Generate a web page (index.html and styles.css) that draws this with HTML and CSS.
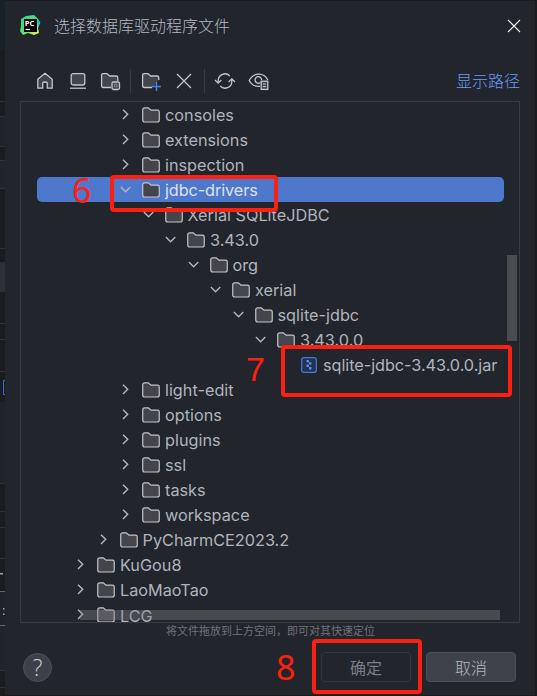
FILE: index.html
```html
<!DOCTYPE html>
<html lang="zh-CN">
<head>
<meta charset="utf-8">
<title>选择数据库驱动程序文件</title>
<link rel="stylesheet" href="styles.css">
</head>
<body>
<svg class="defs" width="0" height="0">
  <symbol id="folder" viewBox="0 0 18 16"><path d="M.75 2.8Q.75.8 2.75.8H6.3L9 3.2H15.5Q17.25 3.2 17.25 5V13Q17.25 15 15.3 15H2.7Q.75 15 .75 13Z" fill="#43454a" stroke="#c3c5ca" stroke-width="1.2"/></symbol>
  <symbol id="right" viewBox="0 0 12 12"><path d="M3 .7 7.7 5.3 3 9.9" fill="none" stroke="#b4b8bf" stroke-width="1.4"/></symbol>
  <symbol id="down" viewBox="0 0 12 12"><path d="M.9 3.1 5.6 7.7 10.3 3.1" fill="none" stroke="#b4b8bf" stroke-width="1.4"/></symbol>
</svg>
<svg class="editor" width="5" height="696" viewBox="0 0 5 696">
  <path d="M0 0h5v50H0z" fill="#18212b"/>
  <path d="M0 117h5v29H0zM0 160h5v28H0zM0 402h5v81H0zM0 592h5v78H0z" fill="#20252b"/>
  <path d="M0 262h5v30H0z" fill="#2c3037"/>
  <path d="M0 101.500h5M0 116.500h5M0 146.500h5M0 160.500h5M0 188.500h5M0 248.500h5M0 323.500h5M0 339.500h5M0 371.500h5M0 483.500h5M0 511.500h5M0 527.500h5M0 558.500h5M0 670.500h5M0 687.500h5" stroke="#30343a"/>
  <path d="M0 591.500h5M0 625.500h5" stroke="#62666c"/>
  <path d="M5 380.500H3.500v14H5" fill="none" stroke="#3d6fd0"/>
  <path d="M0 573h3v1.500H0zM3 608h1.500v1.500H3zM3 613.500h1.500v1.500H3z" fill="#a3a7ad"/>
</svg>
<main class="dialog">
  <header class="titlebar">
    <svg class="logo" width="21" height="21" viewBox="0 0 21 21">
      <defs><linearGradient id="lg" x1="0" y1="0" x2="1" y2="1"><stop offset="0" stop-color="#21d789"/><stop offset=".5" stop-color="#5bdc78"/><stop offset="1" stop-color="#fcf84a"/></linearGradient></defs>
      <path d="M1 4 6 1 14 0 18 4 20 8 18 13 19 18 14 20 8 18 3 20 0 16 1 11Z" fill="url(#lg)"/>
      <path d="M17 5 20.5 7 18 12Z" fill="#07c3f2"/>
      <rect x="4" y="4" width="13" height="13" fill="#000"/>
      <text class="logo-text" x="4.800" y="10.500">PC</text>
      <path d="M5.500 14.500h4.500" stroke="#fff" stroke-width="1.200"/>
    </svg>
    <h1>选择数据库驱动程序文件</h1>
    <svg class="close" width="14" height="14" viewBox="0 0 14 14"><path d="M1 1 13 13M13 1 1 13" stroke="#fff" stroke-width="1.100"/></svg>
  </header>
  <nav class="toolbar">
    <svg class="tool" width="20" height="20" viewBox="0 0 20 20"><path d="M2.8 8.3 10 2.3 17.2 8.3V17.2H12.3V12.500Q12.3 11 10 11T7.7 12.500V17.2H2.8Z" fill="#43454a" stroke="#c3c5ca" stroke-width="1.3" stroke-linejoin="round"/></svg>
    <svg class="tool laptop" width="20" height="20" viewBox="0 0 20 20"><rect x="3.2" y="2.600" width="13.600" height="11.400" rx="2" fill="#43454a" stroke="#c3c5ca" stroke-width="1.3"/><path d="M2 17.2H18" stroke="#c3c5ca" stroke-width="1.3"/></svg>
    <svg class="tool project" width="21" height="20" viewBox="0 0 21 20"><path d="M11 16.500H3.3Q1.600 16.500 1.600 14.800V4.2Q1.600 2.600 3.3 2.600H7L9.7 5H16Q17.8 5 17.8 6.8V10" fill="#43454a" stroke="#c3c5ca" stroke-width="1.3"/><rect x="12" y="11" width="7.500" height="7.500" rx="1.500" fill="#43454a" stroke="#c3c5ca" stroke-width="1.3"/><path d="M14.500 13.200h2.500v2.600h-2.500z" fill="none" stroke="#8f9298" stroke-width=".8"/></svg>
    <i class="sep"></i>
    <svg class="tool newdir" width="21" height="20" viewBox="0 0 21 20"><path d="M11 16.500H3.3Q1.600 16.500 1.600 14.800V4.2Q1.600 2.600 3.3 2.600H7L9.7 5H16Q17.8 5 17.8 6.8V9" fill="#43454a" stroke="#c3c5ca" stroke-width="1.3"/><path d="M15.500 11v9M11 15.500h9" stroke="#4682fa" stroke-width="1.400"/></svg>
    <svg class="tool del" width="20" height="20" viewBox="0 0 20 20"><path d="M3 3 17 17M17 3 3 17" stroke="#c3c5ca" stroke-width="1.3"/></svg>
    <i class="sep second"></i>
    <svg class="tool sync" width="22" height="20" viewBox="0 0 22 20"><path d="M4.2 12V9.500A6.700 6.700 0 0 1 15.800 5M1 9 4.2 12.2 7.400 9M17.800 8v2.500A6.700 6.700 0 0 1 6.2 15M14.600 11 17.800 7.800 21 11" fill="none" stroke="#c3c5ca" stroke-width="1.3"/></svg>
    <svg class="tool eye" width="22" height="20" viewBox="0 0 22 20"><path d="M12 15.2C7 16 3.2 13.3 1.2 9.500 5.400 1.2 15.900 1.2 19.800 9" fill="none" stroke="#c3c5ca" stroke-width="1.3"/><path d="M12.500 11.500A3.3 3.3 0 1 1 13.700 9" fill="none" stroke="#c3c5ca" stroke-width="1.3"/><rect x="13.2" y="10.2" width="6.600" height="8.2" fill="#43454a" stroke="#c3c5ca" stroke-width="1.3"/><path d="M15 13h3M15 15.600h3" stroke="#c3c5ca"/></svg>
    <a class="show-path">显示路径</a>
  </nav>
  <section class="tree">
    <div class="row l2"><svg class="arrow"><use href="#right"/></svg><svg class="folder"><use href="#folder"/></svg><span>consoles</span></div>
    <div class="row l2"><svg class="arrow"><use href="#right"/></svg><svg class="folder"><use href="#folder"/></svg><span>extensions</span></div>
    <div class="row l2"><svg class="arrow"><use href="#right"/></svg><svg class="folder"><use href="#folder"/></svg><span>inspection</span></div>
    <div class="row l2 selected"><svg class="arrow"><use href="#down"/></svg><svg class="folder"><use href="#folder"/></svg><span>jdbc-drivers</span></div>
    <div class="row l3"><svg class="arrow"><use href="#down"/></svg><svg class="folder"><use href="#folder"/></svg><span>Xerial SQLiteJDBC</span></div>
    <div class="row l4"><svg class="arrow"><use href="#down"/></svg><svg class="folder"><use href="#folder"/></svg><span>3.43.0</span></div>
    <div class="row l5"><svg class="arrow"><use href="#down"/></svg><svg class="folder"><use href="#folder"/></svg><span>org</span></div>
    <div class="row l6"><svg class="arrow"><use href="#down"/></svg><svg class="folder"><use href="#folder"/></svg><span>xerial</span></div>
    <div class="row l7"><svg class="arrow"><use href="#down"/></svg><svg class="folder"><use href="#folder"/></svg><span>sqlite-jdbc</span></div>
    <div class="row l8"><svg class="arrow"><use href="#down"/></svg><svg class="folder"><use href="#folder"/></svg><span>3.43.0.0</span></div>
    <div class="row l9"><svg class="jar" viewBox="0 0 16 16"><rect x=".7" y=".7" width="14.600" height="14.600" rx="2" fill="#25324d" stroke="#4a79d8" stroke-width="1.2"/><path d="M5.500 3h2.500v2.3H5.500zM8 5.3h2.500v2.3H8zM5.500 7.600h2.500v2.3H5.500zM8 9.900h2.500v2.600H8z" fill="#548af7"/></svg><span>sqlite-jdbc-3.43.0.0.jar</span></div>
    <div class="row l2"><svg class="arrow"><use href="#right"/></svg><svg class="folder"><use href="#folder"/></svg><span>light-edit</span></div>
    <div class="row l2"><svg class="arrow"><use href="#right"/></svg><svg class="folder"><use href="#folder"/></svg><span>options</span></div>
    <div class="row l2"><svg class="arrow"><use href="#right"/></svg><svg class="folder"><use href="#folder"/></svg><span>plugins</span></div>
    <div class="row l2"><svg class="arrow"><use href="#right"/></svg><svg class="folder"><use href="#folder"/></svg><span>ssl</span></div>
    <div class="row l2"><svg class="arrow"><use href="#right"/></svg><svg class="folder"><use href="#folder"/></svg><span>tasks</span></div>
    <div class="row l2"><svg class="arrow"><use href="#right"/></svg><svg class="folder"><use href="#folder"/></svg><span>workspace</span></div>
    <div class="row l1"><svg class="arrow"><use href="#right"/></svg><svg class="folder"><use href="#folder"/></svg><span>PyCharmCE2023.2</span></div>
    <div class="row l0"><svg class="arrow"><use href="#right"/></svg><svg class="folder"><use href="#folder"/></svg><span>KuGou8</span></div>
    <div class="row l0"><svg class="arrow"><use href="#right"/></svg><svg class="folder"><use href="#folder"/></svg><span>LaoMaoTao</span></div>
    <div class="row l0 last"><svg class="arrow"><use href="#right"/></svg><svg class="folder"><use href="#folder"/></svg><span>LCG</span></div>
    <i class="vbar"></i><i class="hbar"></i>
  </section>
  <p class="hint">将文件拖放到上方空间，即可对其快速定位</p>
  <footer class="actions">
    <button class="help">?</button>
    <button class="btn ok">确定</button>
    <button class="btn cancel">取消</button>
  </footer>
</main>
<div class="mark mark6"></div><b class="num num6">6</b>
<div class="mark mark7"></div><b class="num num7">7</b>
<div class="mark mark8"></div><b class="num num8">8</b>
</body>
</html>
```
FILE: styles.css
```css
* { box-sizing: border-box; }
body {
  margin: 0;
  width: 537px;
  height: 696px;
  overflow: hidden;
  position: relative;
  padding: 1px 2px 1px 5px;
  background: #1b1c1e;
  color: #afb4be;
  font-family: Inter, "Noto Sans CJK SC", sans-serif;
}
svg { flex: none; display: block; }
.defs { position: absolute; }
.editor { position: absolute; left: 0; top: 0; }
.dialog {
  height: 694px;
  background: #22252b;
  padding: 0 15px;
  display: flex;
  flex-direction: column;
}
.titlebar { height: 50px; display: flex; align-items: center; }
.logo { margin-top: -2px; }
.logo-text { font: 700 7.5px "Open Sans", sans-serif; fill: #fff; }
h1 {
  margin: -3px auto 0 13px;
  font: 300 16px/24px "Noto Sans CJK SC", sans-serif;
  color: #b2b8c4;
}
.close { margin-right: -1px; }
.toolbar { height: 50px; padding: 10px 0 0 15px; display: flex; align-items: center; }
.laptop { margin-left: 13px; }
.project { margin-left: 12px; }
.newdir { margin-left: 10px; }
.del { margin-left: 12px; }
.sync { margin-left: 9px; }
.eye { margin-left: 12px; }
.sep { width: 1px; height: 24px; margin-left: 9px; background: #393b40; }
.second { margin-left: 10px; }
.show-path {
  margin: -2px 0 0 auto;
  font: 300 16px/24px "Noto Sans CJK SC", sans-serif;
  color: #6b9bfa;
}
.tree {
  position: relative;
  height: 522px;
  border: 1px solid #393b40;
  overflow: hidden;
}
.row {
  height: 25px;
  display: flex;
  align-items: center;
  font-size: 16.25px;
  line-height: 25px;
  white-space: nowrap;
}
.row span { margin-left: 5px; position: relative; top: 1px; }
.last span { line-height: 12px; }
.arrow { width: 12px; height: 12px; }
.folder { width: 18px; height: 16px; margin-left: 10px; }
.jar { width: 16px; height: 16px; }
.row .jar + span { margin-left: 6px; letter-spacing: -.05px; }
.l0 { padding-left: 54px; }
.l1 { padding-left: 76.5px; }
.l2 { padding-left: 99px; }
.l3 { padding-left: 121.5px; }
.l4 { padding-left: 144px; }
.l5 { padding-left: 166.5px; }
.l6 { padding-left: 189px; }
.l7 { padding-left: 211.5px; }
.l8 { padding-left: 234px; }
.l9 { padding-left: 280px; }
.selected {
  margin: 0 15px 0 16px;
  padding-left: 83px;
  border-radius: 5px;
  background: #4e78cc;
  color: #dfe1e5;
}
.selected span { letter-spacing: -.1px; }
.vbar { position: absolute; left: 486px; top: 153px; width: 10px; height: 86px; background: #4a4c50; }
.hbar { position: absolute; left: 59px; bottom: 2px; width: 420px; height: 10px; background: rgba(125, 127, 130, .4); }
.hint {
  margin: 0;
  height: 18px;
  padding-left: 1px;
  text-align: center;
  font: 400 11px/15px "Noto Sans CJK SC", sans-serif;
  color: #6f737a;
}
.actions { display: flex; align-items: center; padding: 11px 4px 0 3px; }
button { font-family: "Noto Sans CJK SC", sans-serif; padding: 0; }
.help {
  width: 29px;
  height: 29px;
  border: 1px solid #4e5157;
  border-radius: 50%;
  background: #3d4048;
  color: #ced0d6;
  font: 300 23px/26px "Open Sans", sans-serif;
}
.btn { width: 90px; height: 30px; border-radius: 4px; font-size: 16px; line-height: 26px; font-weight: 300; }
.ok { margin-left: auto; border: 1px solid #33363c; background: transparent; color: #7a7e86; font-weight: 400; }
.cancel { margin-left: 15px; border: 1px solid #4c5058; background: #3e424a; color: #b4b8bf; }
.mark { position: absolute; border: 4px solid #fc2012; border-radius: 4px; }
.mark6 { left: 110px; top: 175px; width: 168px; height: 37px; }
.mark7 { left: 281px; top: 345px; width: 231px; height: 52px; }
.mark8 { left: 312px; top: 639px; width: 110px; height: 55px; }
.num { position: absolute; font: 400 34px/40px "Noto Sans", sans-serif; color: #fc2012; }
.num6 { left: 72px; top: 170px; }
.num7 { left: 246px; top: 349px; font-family: "Liberation Sans", sans-serif; }
.num8 { left: 276px; top: 647px; }
```
